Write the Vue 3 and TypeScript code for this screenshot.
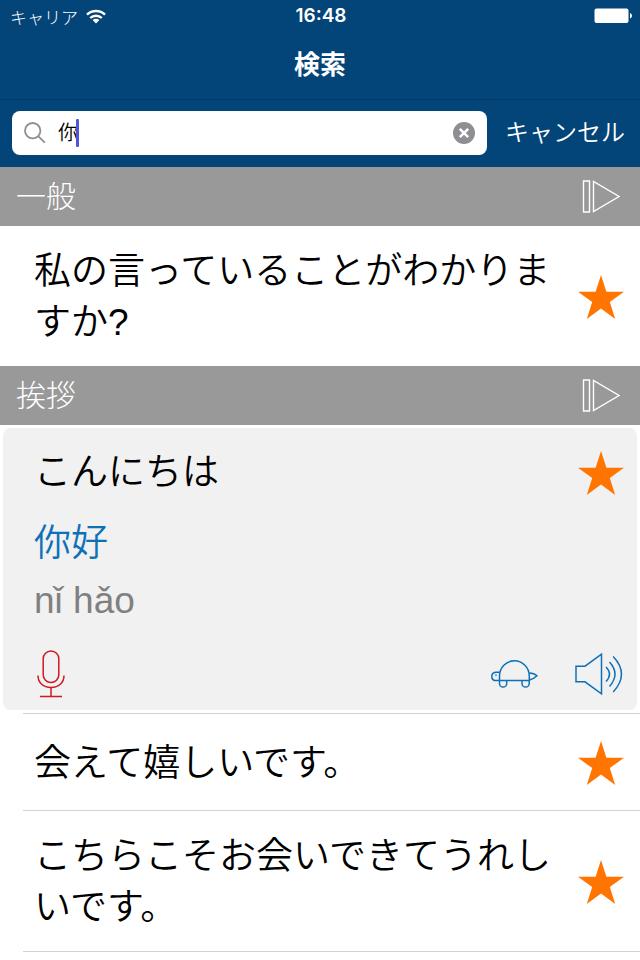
<script setup lang="ts">
import { ref } from 'vue'

interface Phrase {
  id: number
  text: string
  translation?: string
  reading?: string
}

interface Section {
  title: string
  phrases: Phrase[]
}

const query = ref('你')
const sections: Section[] = [
  {
    title: '一般',
    phrases: [{ id: 1, text: '私の言っていることがわかりますか?' }],
  },
  {
    title: '挨拶',
    phrases: [
      { id: 2, text: 'こんにちは', translation: '你好', reading: 'nǐ hǎo' },
      { id: 3, text: '会えて嬉しいです。' },
      { id: 4, text: 'こちらこそお会いできてうれしいです。' },
    ],
  },
]
</script>

<template>
  <div class="screen">
    <header class="top">
      <div class="status">
        <div class="carrier">
          <span>キャリア</span>
          <svg class="wifi" viewBox="0 0 20 15" aria-hidden="true">
            <path d="M1 5.6a13 13 0 0 1 18 0" />
            <path d="M4.2 9a8.4 8.4 0 0 1 11.6 0" />
            <path class="dot" d="M10 14.6l-3.4-3.5a4.9 4.9 0 0 1 6.8 0z" />
          </svg>
        </div>
        <span class="time">16:48</span>
        <svg class="battery" viewBox="0 0 38 16" aria-hidden="true">
          <rect x="0.5" y="0.5" width="34" height="14.5" rx="2" />
          <path d="M36 5q2 .6 2 2.8t-2 2.8z" />
        </svg>
      </div>
      <h1 class="title">検索</h1>
      <form class="search" role="search" @submit.prevent>
        <div class="field">
          <svg class="glass" viewBox="0 0 22 22" aria-hidden="true">
            <circle cx="8.7" cy="8.7" r="7.7" />
            <path d="M14.2 14.2l6.6 6.4" />
          </svg>
          <div class="entry">
            <input v-model="query" type="text" aria-label="検索" />
            <span class="caret"></span>
          </div>
          <button class="clear" type="button" aria-label="消去" @click="query = ''">
            <svg viewBox="0 0 22 22" aria-hidden="true">
              <circle cx="11" cy="11" r="11" />
              <path d="M6.8 6.8l8.4 8.4M15.2 6.8l-8.4 8.4" />
            </svg>
          </button>
        </div>
        <button class="cancel" type="button">キャンセル</button>
      </form>
    </header>

    <main>
      <section v-for="section in sections" :key="section.title">
        <div class="heading">
          <h2>{{ section.title }}</h2>
          <button type="button" aria-label="すべて再生">
            <svg class="play" viewBox="0 0 38 33" aria-hidden="true">
              <path d="M1.500 1h6v31h-6zM11.500 1.500v30L37 16.500z" />
            </svg>
          </button>
        </div>
        <ul>
          <li
            v-for="phrase in section.phrases"
            :key="phrase.id"
            :class="{ open: phrase.translation }"
          >
            <div class="row">
              <p class="phrase">{{ phrase.text }}</p>
              <button type="button" aria-label="お気に入り">
                <svg class="star" viewBox="0 0 46 44" aria-hidden="true">
                  <path d="M23 0l5.400 16.800H46L31.800 27.100 37.200 44 23 33.600 8.800 44l5.400-16.900L0 16.800h17.600z" />
                </svg>
              </button>
            </div>
            <template v-if="phrase.translation">
              <p class="translation">{{ phrase.translation }}</p>
              <p class="reading">{{ phrase.reading }}</p>
              <div class="tools">
                <button type="button" aria-label="録音">
                  <svg class="mic" viewBox="0 0 28 48" aria-hidden="true">
                    <rect x="6.200" y="1" width="15.600" height="31.500" rx="7.800" />
                    <path d="M1 25.500c0 7.500 5.500 12 13 12s13-4.500 13-12M14 37.500v9M3 46.500h22" />
                  </svg>
                </button>
                <button class="slow" type="button" aria-label="ゆっくり再生">
                  <svg class="turtle" viewBox="0 0 47 28" aria-hidden="true">
                    <path d="M8.500 20.500v-4.500a14.700 15 0 0 1 29.800 0v4.500z" />
                    <path d="M8.500 12.200H5.500q-4.700 0-4.700 4.200 0 4.200 4.700 4.200h3" />
                    <path d="M38.300 13c3.500 0 5.700 1 7.700 2.800-2 2-4.200 3.300-7.700 4.200" />
                    <path d="M8.500 20.500v3a3.600 3.600 0 0 0 7.200 0v-3M31 20.500v3a3.600 3.600 0 0 0 7.200 0v-3" />
                    <circle cx="5" cy="15.200" r=".2" />
                  </svg>
                </button>
                <button type="button" aria-label="再生">
                  <svg class="speaker" viewBox="0 0 48 42" aria-hidden="true">
                    <path d="M1 13.200h9L26.500 1.200v39.600L10 28.800H1z" />
                    <path d="M31 14q7 7 0 14.500M34.500 9q11 12 0 24.500M38.200 3.500q16.500 17.500 0 35.500" />
                  </svg>
                </button>
              </div>
            </template>
          </li>
        </ul>
      </section>
    </main>
  </div>
</template>

<style>
body {
  margin: 0;
  background: #fff;
}
</style>

<style scoped>
.screen {
  font-family: "Liberation Sans", "Noto Sans CJK JP", sans-serif;
  font-weight: 350;
  color: #000;
}
h1, h2, p, ul {
  margin: 0;
  padding: 0;
  font-weight: inherit;
}
svg {
  display: block;
  fill: none;
}
button {
  display: block;
  flex: none;
  margin: 0;
  padding: 0;
  border: 0;
  background: none;
  font: inherit;
  color: inherit;
  cursor: pointer;
}
.top {
  background: #044579;
  color: #fff;
}
.status {
  display: grid;
  grid-template-columns: 1fr auto 1fr;
  align-items: center;
  height: 32px;
  padding: 0 8px 0 10px;
}
.carrier {
  display: flex;
  align-items: center;
  gap: 8px;
  font-size: 17px;
  font-weight: 300;
}
.wifi {
  width: 20px;
  height: 15px;
  stroke: #fff;
  stroke-width: 2.4;
}
.wifi .dot {
  fill: #fff;
  stroke: none;
}
.time {
  font: 600 19px/32px Inter, sans-serif;
}
.battery {
  justify-self: end;
  width: 38px;
  height: 16px;
  fill: #fff;
}
.title {
  height: 67px;
  font-size: 26px;
  font-weight: 700;
  line-height: 67px;
  text-align: center;
}
.search {
  display: flex;
  align-items: flex-start;
  gap: 18px;
  height: 56px;
  padding: 11px 15px 0 12px;
  border-top: 1px solid #033a69;
}
.field {
  display: flex;
  flex: 1;
  align-items: center;
  gap: 12px;
  min-width: 0;
  height: 44px;
  padding: 0 12px;
  border-radius: 8px;
  background: #fff;
}
.glass {
  flex: none;
  width: 22px;
  height: 22px;
  stroke: #8e8e93;
  stroke-width: 1.8;
}
.entry {
  position: relative;
  flex: 1;
  min-width: 0;
}
.entry input {
  display: block;
  box-sizing: border-box;
  width: 100%;
  height: 28px;
  margin: 0;
  padding: 0;
  border: 0;
  outline: 0;
  background: none;
  font: inherit;
  font-size: 20px;
  line-height: 28px;
  color: #000;
  caret-color: transparent;
}
.caret {
  position: absolute;
  top: 0;
  left: 18px;
  width: 3px;
  height: 28px;
  border-radius: 1px;
  background: #4e57dc;
}
.clear svg {
  width: 22px;
  height: 22px;
  fill: #8e8e93;
  stroke-width: 0;
}
.clear path {
  stroke: #fff;
  stroke-width: 2.6;
}
.cancel {
  font-size: 24px;
  line-height: 44px;
}
.heading {
  display: flex;
  align-items: center;
  justify-content: space-between;
  height: 59px;
  padding: 0 20px 0 16px;
  background: #999;
  color: #fff;
}
.heading h2 {
  font-size: 30px;
  font-weight: 300;
  line-height: 60px;
}
.play {
  width: 38px;
  height: 33px;
  stroke: #fff;
  stroke-width: 1.4;
}
ul {
  list-style: none;
}
li {
  display: flow-root;
}
.row {
  display: flex;
  align-items: center;
  gap: 24px;
  padding: 20px 16px 18px 34px;
}
.phrase {
  flex: 1;
  font-size: 37px;
  line-height: 51px;
}
.star {
  width: 46px;
  height: 44px;
  fill: #ff7500;
}
section + section li:not(.open) {
  margin-left: 23px;
  border-bottom: 1px solid #d2d2d4;
}
section + section li:not(.open) .row {
  min-height: 58px;
  padding-left: 11px;
}
.open {
  margin: 3px 3px 0;
  padding: 19px 13px 12px 31px;
  border-radius: 8px;
  background: #f1f1f1;
}
.open .row {
  padding: 0;
}
.open + li {
  margin-top: 3px;
  border-top: 1px solid #d2d2d4;
}
.translation,
.reading {
  font-size: 37px;
  line-height: 51px;
}
.translation {
  margin-top: 20px;
  color: #0e71b8;
}
.reading {
  margin-top: 6px;
  color: #808080;
}
.tools {
  display: flex;
  align-items: center;
  margin-top: 24px;
}
.mic {
  width: 28px;
  height: 48px;
  margin-left: 3px;
  stroke: #cf1820;
  stroke-width: 1.5;
}
.slow {
  margin-right: 37px;
  margin-left: auto;
}
.turtle {
  width: 47px;
  height: 28px;
  stroke: #0e71b8;
  stroke-width: 1.5;
}
.speaker {
  width: 48px;
  height: 42px;
  margin-right: 1px;
  stroke: #0e71b8;
  stroke-width: 1.5;
}
</style>
